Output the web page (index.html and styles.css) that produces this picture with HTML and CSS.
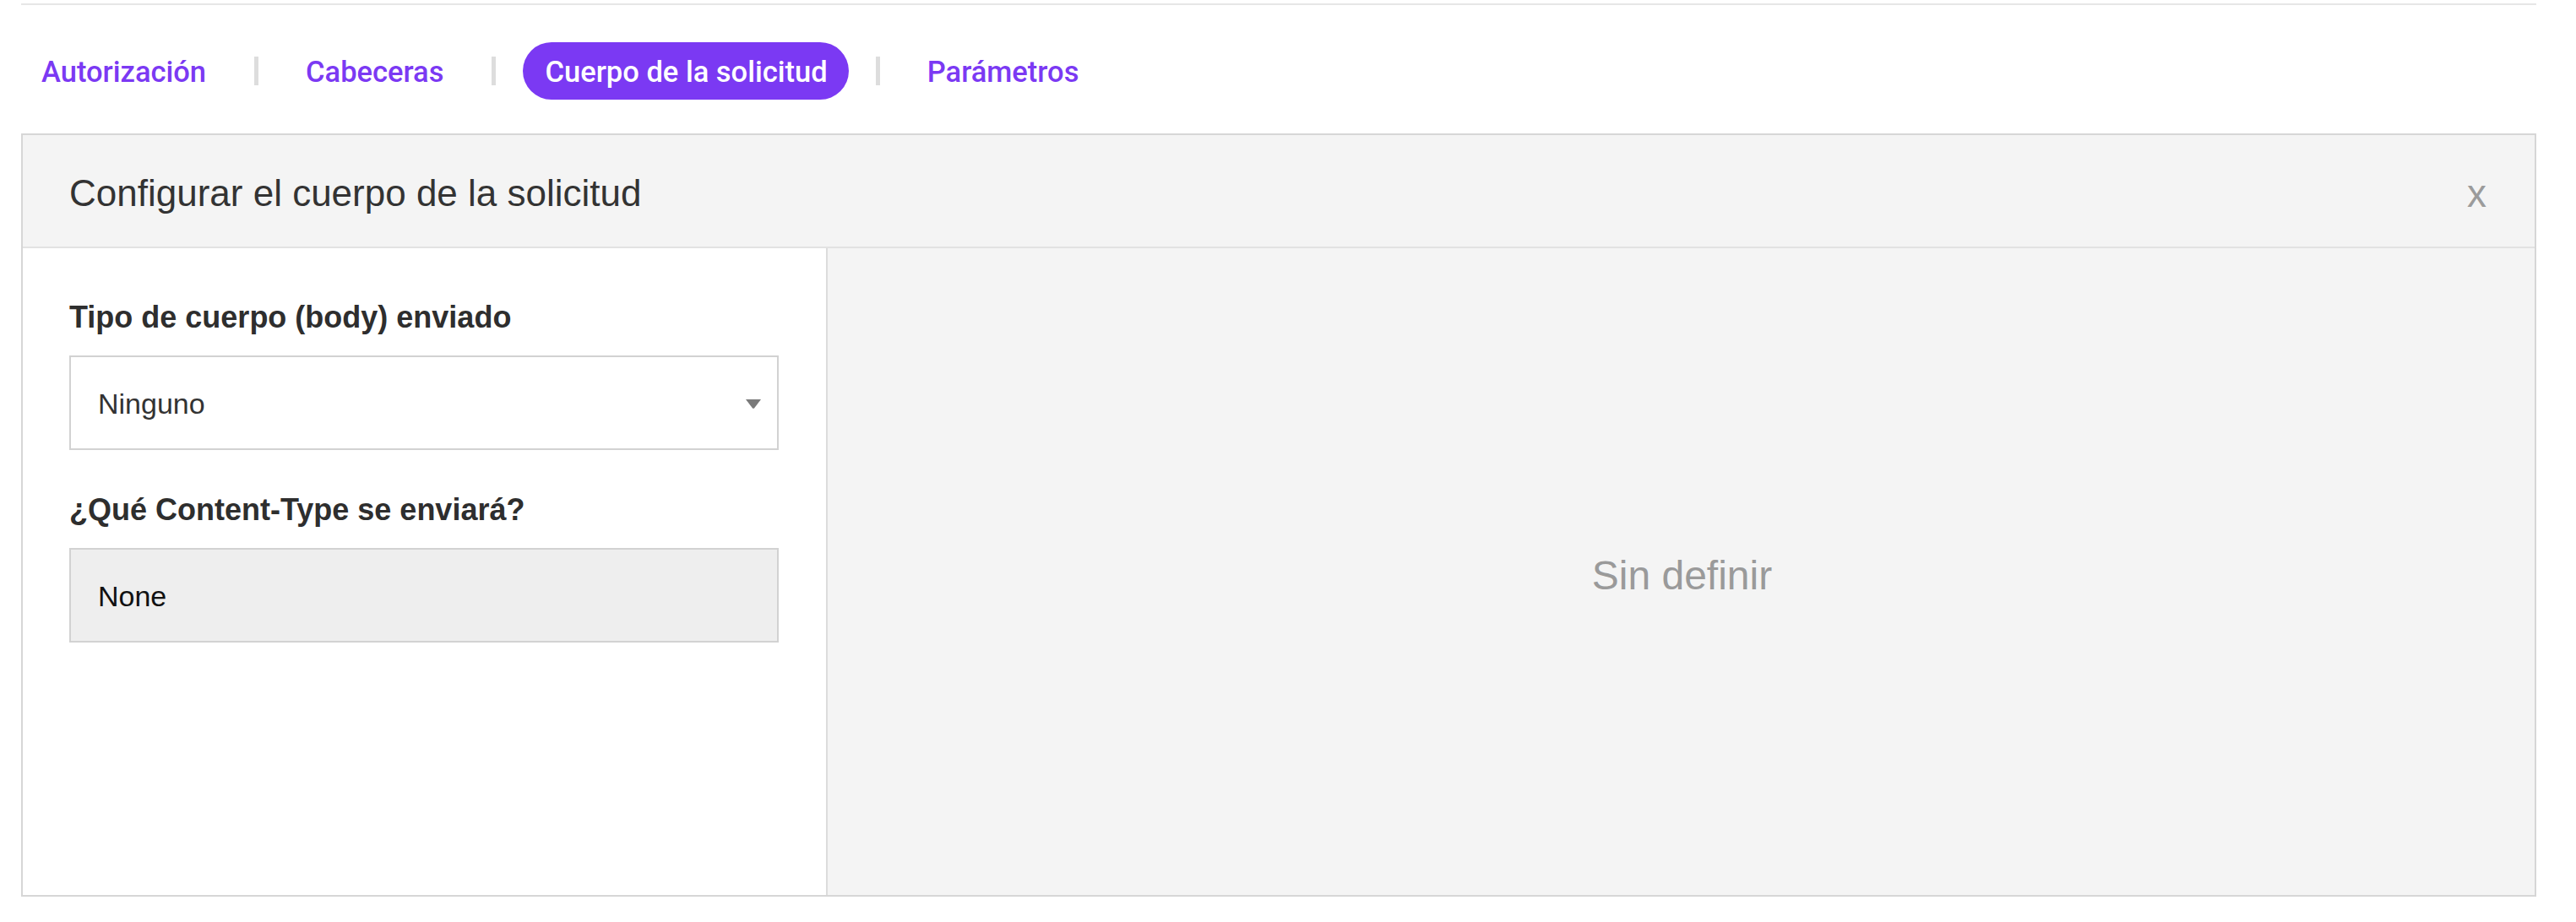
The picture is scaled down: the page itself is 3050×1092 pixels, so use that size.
FILE: index.html
```html
<!DOCTYPE html>
<html lang="es">
<head>
    <meta charset="UTF-8">
    <title>Configurar el cuerpo de la solicitud</title>
    <link rel="stylesheet" href="styles.css">
</head>
<body>
    <div class="page">
        <div class="tabs">
            <span class="tab">Autorización</span>
            <span class="tab-sep"></span>
            <span class="tab">Cabeceras</span>
            <span class="tab-sep"></span>
            <span class="tab active">Cuerpo de la solicitud</span>
            <span class="tab-sep"></span>
            <span class="tab">Parámetros</span>
        </div>

        <div class="panel">
            <div class="panel-header">
                <span class="panel-title">Configurar el cuerpo de la solicitud</span>
                <span class="panel-close">x</span>
            </div>
            <div class="panel-body">
                <div class="panel-form">
                    <div class="field-label">Tipo de cuerpo (body) enviado</div>
                    <div class="select-box">
                        <span>Ninguno</span>
                        <svg class="select-arrow" width="18" height="11" viewBox="0 0 18 11">
                            <path d="M0 0 H18 L10 10.5 Q9 11.2 8 10.5 Z" fill="#7a7a7a"/>
                        </svg>
                    </div>
                    <div class="field-label">¿Qué Content-Type se enviará?</div>
                    <div class="readonly-box">None</div>
                </div>
                <div class="panel-preview">
                    <span class="empty-text">Sin definir</span>
                </div>
            </div>
        </div>
    </div>
</body>
</html>
```

FILE: styles.css
```css
body {
    margin: 0;
    font-family: "Liberation Sans", Arial, sans-serif;
    background-color: #ffffff;
}
.page {
    width: 2978px;
    margin-left: 25px;
    padding-top: 4px;
}
.tabs {
    border-top: 2px solid #e6e6e6;
    display: flex;
    align-items: center;
    padding-top: 44px;
}
.tab {
    font-family: Roboto, "Liberation Sans", sans-serif;
    font-weight: 500;
    font-size: 34.5px;
    color: #7b39f3;
    height: 68px;
    line-height: 70px;
    padding: 0 25px 0 24px;
    border-radius: 34px;
    white-space: nowrap;
}
.tab.active {
    background-color: #7b39f3;
    color: #ffffff;
    padding: 0 25px 0 26px;
}
.tab-sep {
    width: 5px;
    height: 34px;
    background-color: #dddddd;
    margin: 0 32px;
}
.panel {
    margin-top: 40px;
    border: 2px solid #d6d6d6;
    box-sizing: border-box;
}
.panel-header {
    height: 134px;
    background-color: #f4f4f4;
    border-bottom: 2px solid #e2e2e2;
    box-sizing: border-box;
    display: flex;
    align-items: center;
    justify-content: space-between;
    padding: 6px 57px 0 55px;
}
.panel-title {
    font-size: 44px;
    color: #333333;
}
.panel-close {
    font-size: 46px;
    color: #9b9b9b;
}
.panel-body {
    display: flex;
    height: 766px;
}
.panel-form {
    width: 953px;
    border-right: 2px solid #dcdcdc;
    padding: 60px 56px 0 55px;
    box-sizing: border-box;
    display: flex;
    flex-direction: column;
}
.field-label {
    font-size: 36px;
    font-weight: bold;
    color: #2e2e2e;
    line-height: 43px;
}
.select-box,
.readonly-box {
    height: 112px;
    border: 2px solid #d2d2d2;
    box-sizing: border-box;
    margin: 24px 0 49px;
    display: flex;
    align-items: center;
    font-size: 34px;
    padding: 2px 19px 0 32px;
}
.select-box {
    justify-content: space-between;
    background-color: #ffffff;
    color: #333333;
}
.readonly-box {
    background-color: #eeeeee;
    color: #111111;
}
.panel-preview {
    flex-grow: 1;
    background-color: #f4f4f4;
    display: flex;
    align-items: center;
    justify-content: center;
    padding-top: 8px;
}
.empty-text {
    font-size: 48px;
    color: #9a9a9a;
    margin-left: 2px;
}
```
